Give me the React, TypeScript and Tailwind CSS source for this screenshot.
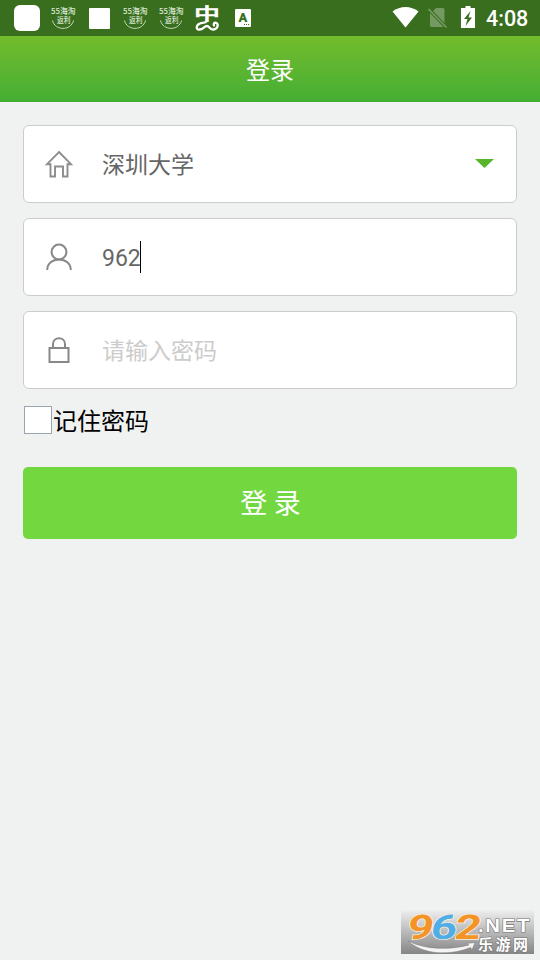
import { useState } from 'react'

function RebateIcon() {
	return (
		<svg className="w-9 h-9" viewBox="0 0 36 36" fill="none">
			<g fill="#dce8d4" className="font-['Noto_Sans_CJK_SC',sans-serif] font-medium">
				<text x="6" y="14" fontSize="8" textLength="24.5" lengthAdjust="spacingAndGlyphs">
					55海淘
				</text>
				<text x="12" y="23" fontSize="7.500" textLength="13.500" lengthAdjust="spacingAndGlyphs">
					返利
				</text>
			</g>
			<path d="M7.500 20.500C10 31 26 31 28.500 20.500" stroke="#c5d8b9" />
		</svg>
	)
}

function StatusBar() {
	return (
		<div className="flex h-9 justify-between bg-[#396e1f] pl-[9px] pr-3 text-white">
			<div className="flex items-center">
				<div className="w-9 pl-[5px]">
					<div className="h-[26px] w-[26px] rounded-md bg-white" />
				</div>
				<RebateIcon />
				<div className="w-9 pl-2">
					<div className="h-[21px] w-[21px] rounded-[1px] bg-white" />
				</div>
				<RebateIcon />
				<RebateIcon />
				<svg className="w-9 h-9" viewBox="0 0 36 36" fill="none">
					<text
						x="5"
						y="20"
						fontSize="17"
						textLength="26"
						lengthAdjust="spacingAndGlyphs"
						fill="white"
						stroke="white"
						strokeWidth="0.500"
						className="font-['Noto_Sans_CJK_SC',sans-serif] font-medium"
					>
						中
					</text>
					<path
						d="M18 20C18 23.500 13.500 22.500 11 23.500C7 25 6.500 30 10.500 29.500C14.500 29.500 15 26 18 26C20.500 26 20.500 30 24.500 29.500C29 29 30 23.500 27 22.800C25 22.500 24.300 24 25 25.500"
						stroke="white"
						strokeWidth="2.3"
						strokeLinecap="round"
					/>
				</svg>
				<div className="w-9 pl-[10px]">
					<div className="relative h-[18px] w-4 rounded-[1px] bg-white text-center font-['Roboto',sans-serif] text-[13px] leading-[17px] font-black text-[#396e1f]">
						A
						<div className="absolute right-0.5 bottom-0.5 flex gap-px">
							<i className="h-px w-px bg-[#396e1f]" />
							<i className="h-px w-px bg-[#396e1f]" />
							<i className="h-px w-px bg-[#396e1f]" />
						</div>
					</div>
				</div>
			</div>
			<div className="flex items-center">
				<svg className="mr-[9px] h-9 w-[27px]" viewBox="0 0 27 36" fill="white">
					<path d="M0.500 11.500C8 5.500 19 5.500 26.500 11.500L13.500 27.500Z" />
				</svg>
				<svg className="mr-[13px] h-9 w-5" viewBox="0 0 20 36">
					<path d="M8 8H15Q16.500 8 16.500 9.500V23L5 11ZM2 13L15.500 27H3.500Q2 27 2 25.500Z" fill="#749a61" />
					<path d="M0.500 9L18.500 27.500" stroke="#749a61" strokeWidth="1.700" />
				</svg>
				<svg className="mr-[11px] h-9 w-[14px]" viewBox="0 0 14 36">
					<path d="M4.500 6H9.500V8H14V28H0V8H4.500Z" fill="white" />
					<path d="M9.500 11L3 19H6.500L4.500 26L11 17.500H7.500Z" fill="#396e1f" />
				</svg>
				<span className="w-[42px] pt-0.5 font-['Roboto',sans-serif] text-[21.500px] leading-9 font-medium whitespace-nowrap">
					4:08
				</span>
			</div>
		</div>
	)
}

function HomeIcon() {
	return (
		<svg className="h-7 w-7" viewBox="0 0 28 28" fill="none" stroke="#8c8c8c" strokeWidth="1.900">
			<path d="M14 2L26 14.200H22.500V26.500H18V16.500H10V26.500H5.500V14.200H2L14 2Z" />
		</svg>
	)
}

function UserIcon() {
	return (
		<svg className="h-7 w-7" viewBox="0 0 28 28" fill="none" stroke="#888" strokeWidth="2">
			<circle cx="14" cy="9" r="7.400" />
			<path d="M2.200 27C2.200 20.500 7.500 16.500 14 16.500S25.800 20.500 25.800 27" />
		</svg>
	)
}

function LockIcon() {
	return (
		<svg className="h-7 w-7" viewBox="0 0 28 28" fill="none" stroke="#888" strokeWidth="2">
			<rect x="4.500" y="12" width="19" height="14" />
			<path d="M8 12V8C8 0.300 20 0.300 20 8V12" />
		</svg>
	)
}

function SiteBadge() {
	return (
		<svg className="absolute right-1.5 bottom-1.5 h-11 w-[133px] overflow-visible" viewBox="0 0 133 44">
			<defs>
				<linearGradient id="badge" x1="0" y1="0" x2="0" y2="1">
					<stop offset="0" stopColor="#eeeeee" />
					<stop offset="1" stopColor="#858585" />
				</linearGradient>
			</defs>
			<rect width="133" height="44" fill="url(#badge)" />
			<path
				d="M7 31C25 40 49 40 68 35L65.500 33.500L74 32.500L71 40L69.500 37.500C50 45.500 23 45.500 7 31Z"
				fill="#f4f4f4"
				stroke="#777"
				strokeWidth="0.500"
			/>
			<g
				transform="translate(7 28.700) skewX(-9)"
				fontSize="34"
				stroke="#f6efe4"
				strokeWidth="1.500"
				paintOrder="stroke"
				className="font-['Roboto',sans-serif] font-bold"
			>
				<text x="-2" textLength="26" lengthAdjust="spacingAndGlyphs" fill="#f49426">9</text>
				<text x="21.500" textLength="26" lengthAdjust="spacingAndGlyphs" fill="#51ade5">6</text>
				<text x="45.500" textLength="26" lengthAdjust="spacingAndGlyphs" fill="#f49426">2</text>
			</g>
			<g fill="white" stroke="#777" strokeWidth="1.200" paintOrder="stroke">
				<text
					x="77"
					y="22"
					fontSize="18"
					textLength="53"
					lengthAdjust="spacingAndGlyphs"
					letterSpacing="1.500"
					className="font-['Liberation_Sans',sans-serif] font-bold"
				>
					.NET
				</text>
				<text
					x="77"
					y="39.500"
					fontSize="15"
					textLength="50"
					className="font-['Noto_Sans_CJK_SC',sans-serif] font-bold"
				>
					乐游网
				</text>
			</g>
		</svg>
	)
}

export default function App() {
	const [remember, setRemember] = useState(false)

	return (
		<div className="relative h-[960px] w-[540px] overflow-hidden bg-[#f0f2f1] font-['Roboto','Noto_Sans_CJK_SC',sans-serif]">
			<StatusBar />
			<header className="flex h-[66px] items-center justify-center bg-linear-to-b from-[#72bc2c] to-[#43ae34] pt-[3px]">
				<h1 className="text-2xl text-white">登录</h1>
			</header>
			<main className="px-[23px] pt-[23px]">
				<div className="flex flex-col gap-[15px]">
					<div className="flex h-[78px] items-center rounded-md border border-[#cccccc] bg-white pl-[21px] pr-[22px]">
						<HomeIcon />
						<span className="ml-[29px] pt-1 text-[23px] text-[#666]">深圳大学</span>
						<svg className="mb-0.5 ml-auto h-[9px] w-[19px]" viewBox="0 0 19 9">
							<path d="M0 0H19L9.500 9Z" fill="#56b52b" />
						</svg>
					</div>
					<div className="flex h-[78px] items-center rounded-md border border-[#cccccc] bg-white pl-[21px]">
						<UserIcon />
						<span className="ml-[29px] pt-1 text-[23px] text-[#666]">962</span>
						<span className="-ml-px h-8 w-px bg-black" />
					</div>
					<div className="flex h-[78px] items-center rounded-md border border-[#cccccc] bg-white pl-[21px]">
						<LockIcon />
						<span className="ml-[29px] pt-1 text-[23px] text-[#ccc]">请输入密码</span>
					</div>
				</div>
				<label className="mt-[13px] flex h-9 items-center text-black">
					<input
						type="checkbox"
						checked={remember}
						onChange={() => setRemember(!remember)}
						className="ml-px h-7 w-7 appearance-none border border-[#9aa5b0] bg-white"
					/>
					<span className="ml-px pt-1 text-2xl">记住密码</span>
				</label>
				<button className="mt-[29px] h-[72px] w-full rounded-[5px] bg-[#73d83f] pt-0.5 pl-px text-[27px] text-white">
					登 录
				</button>
			</main>
			<SiteBadge />
		</div>
	)
}
